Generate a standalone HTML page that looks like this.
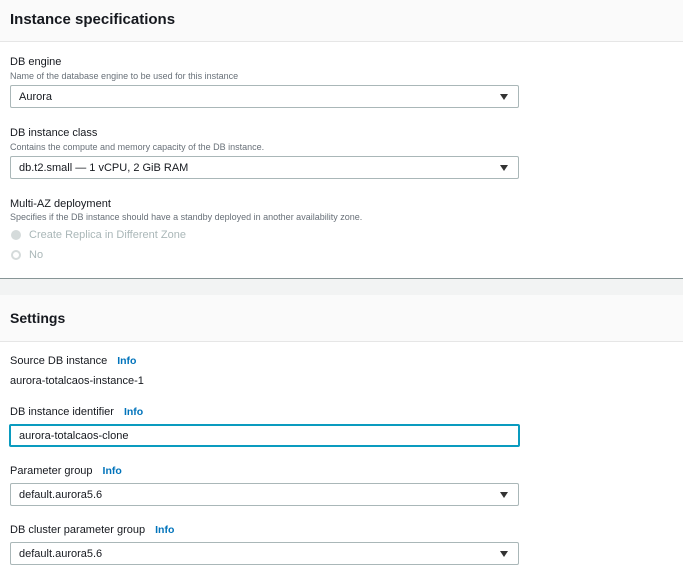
<!DOCTYPE html>
<html><head><style>
body{margin:0;width:683px;height:571px;overflow:hidden;font-family:"Liberation Sans",sans-serif;background:#fff;color:#16191f;position:relative}
.a{position:absolute}
.h{font-weight:bold;font-size:15px}
.l{font-size:11px;color:#16191f}
.d{font-size:9px;color:#687078}
.s{position:absolute;left:10px;height:21px;border:1px solid #aab7b8;border-radius:2px;font-size:11px;line-height:23px;padding-left:8px;box-sizing:content-box;width:499px}
.s .ar{position:absolute;right:10px;top:8px;width:0;height:0;border-left:4.5px solid transparent;border-right:4.5px solid transparent;border-top:6px solid #333}
.i{color:#0073bb;font-weight:bold;margin-left:10px;font-size:10.5px}
.r{position:absolute;left:11px;width:10px;height:10px;border-radius:50%;background:#d5dbdb}
</style></head><body>
<div class="a" style="left:0;top:0;width:683px;height:41px;background:#fafafa;border-bottom:1px solid #e6e6e6"></div>
<div class="a h" style="left:10px;top:11px">Instance specifications</div>
<div class="a l" style="left:10px;top:56px">DB engine</div>
<div class="a d" style="left:10px;top:71px">Name of the database engine to be used for this instance</div>
<div class="s" style="top:85px">Aurora<span class="ar"></span></div>
<div class="a l" style="left:10px;top:127px">DB instance class</div>
<div class="a d" style="left:10px;top:142px">Contains the compute and memory capacity of the DB instance.</div>
<div class="s" style="top:156px">db.t2.small — 1 vCPU, 2 GiB RAM<span class="ar"></span></div>
<div class="a l" style="left:10px;top:198px">Multi-AZ deployment</div>
<div class="a d" style="left:10px;top:212px">Specifies if the DB instance should have a standby deployed in another availability zone.</div>
<div class="r" style="top:230px"></div>
<div class="a" style="left:29px;top:229px;font-size:11px;color:#aab7b8">Create Replica in Different Zone</div>
<div class="r" style="top:250px;width:6px;height:6px;border:2px solid #d5dbdb;background:#fff"></div>
<div class="a" style="left:29px;top:249px;font-size:11px;color:#aab7b8">No</div>
<div class="a" style="left:0;top:278px;width:683px;height:1px;background:#879596"></div>
<div class="a" style="left:0;top:279px;width:683px;height:16px;background:#f2f3f3"></div>
<div class="a" style="left:0;top:295px;width:683px;height:46px;background:#fafafa;border-bottom:1px solid #e6e6e6"></div>
<div class="a h" style="left:10px;top:310px;font-size:14px">Settings</div>
<div class="a l" style="left:10px;top:355px">Source DB instance<span class="i">Info</span></div>
<div class="a l" style="left:10px;top:375px">aurora-totalcaos-instance-1</div>
<div class="a l" style="left:10px;top:406px">DB instance identifier<span class="i">Info</span></div>
<div class="s" style="top:424px;border:2px solid #0a9bbf;height:19px;line-height:21px;left:9px">aurora-totalcaos-clone</div>
<div class="a l" style="left:10px;top:465px">Parameter group<span class="i">Info</span></div>
<div class="s" style="top:483px">default.aurora5.6<span class="ar"></span></div>
<div class="a l" style="left:10px;top:524px">DB cluster parameter group<span class="i">Info</span></div>
<div class="s" style="top:542px">default.aurora5.6<span class="ar"></span></div>
</body></html>
